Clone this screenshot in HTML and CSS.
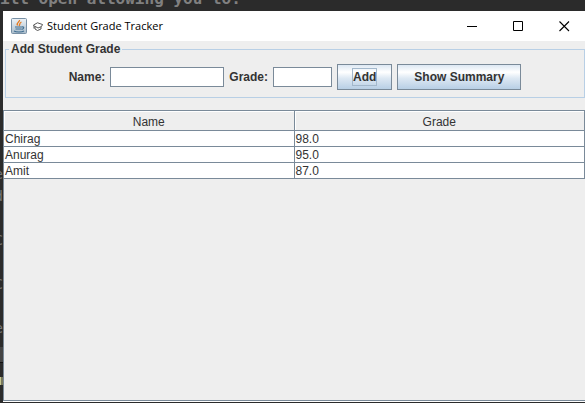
FILE: index.html
```
<!DOCTYPE html>
<html lang="en">
<head>
<meta charset="utf-8">
<title>Student Grade Tracker</title>
<link rel="stylesheet" href="styles.css">
</head>
<body>
<div class="backdrop-line">ill open allowing you to:</div>
<div class="stage">
  <div class="backdrop-edge">
    <span>e</span><span>d</span><span></span><span>C</span><span></span><span>C</span><span></span><span>e</span>
    <i class="edge-block"></i><i class="edge-mark"></i>
  </div>
  <main class="window">
    <header class="titlebar">
      <svg class="java-icon" viewBox="0 0 16 16" aria-hidden="true">
        <defs>
          <linearGradient id="tile" x1="0" y1="0" x2="0" y2="1">
            <stop offset="0" stop-color="#eef3f7"/><stop offset="1" stop-color="#a9bccb"/>
          </linearGradient>
        </defs>
        <rect x=".5" y=".5" width="15" height="15" rx="1" fill="url(#tile)" stroke="#7890a5"/>
        <path d="M8.500 2C9 4 5 4.500 6.500 7.500M10.500 4C8 5 9.500 6 8 8" fill="none" stroke="#e57b22" stroke-width="1.300"/>
        <path d="M4 9h7M4.500 11h6M11 9c2.500-.5 2 2-.3 2.300M3 13c2 1.300 8 1.300 10 0" fill="none" stroke="#416e91" stroke-width="1.200"/>
      </svg>
      <svg class="cap-icon" viewBox="0 0 10 9" aria-hidden="true">
        <path d="M.5 3 4.500.8 9.500 2.500 8.500 4.500 5 6 .5 3.500zM2 5v2l2.500 1.500L8 7V5M1 4v2.500" fill="#fff" stroke="#444" stroke-width=".9"/>
      </svg>
      <h1 class="title">Student Grade Tracker</h1>
      <div class="controls">
        <button type="button" aria-label="Minimize"><svg viewBox="0 0 11 11"><path d="M0 5.500h10" stroke="#000" fill="none"/></svg></button>
        <button type="button" aria-label="Maximize"><svg viewBox="0 0 11 11"><path d="M.5.5h9v9h-9z" stroke="#000" fill="none"/></svg></button>
        <button type="button" aria-label="Close"><svg viewBox="0 0 11 11"><path d="M.5.5l9.500 9.500M10 .5.5 10" stroke="#000" fill="none" stroke-width="1.100"/></svg></button>
      </div>
    </header>
    <form class="grade-form">
      <fieldset class="group">
        <legend>Add Student Grade</legend>
        <div class="fields">
          <label for="name">Name:</label>
          <input id="name" class="name-input" type="text">
          <label for="grade">Grade:</label>
          <input id="grade" class="grade-input" type="text">
          <button type="button" class="metal add"><span class="focus-ring">Add</span></button>
          <button type="button" class="metal">Show Summary</button>
        </div>
      </fieldset>
    </form>
    <section class="scroll-pane">
      <table class="grades">
        <thead><tr><th scope="col">Name</th><th scope="col">Grade</th></tr></thead>
        <tbody>
          <tr><td>Chirag</td><td>98.0</td></tr>
          <tr><td>Anurag</td><td>95.0</td></tr>
          <tr><td>Amit</td><td>87.0</td></tr>
        </tbody>
      </table>
    </section>
  </main>
</div>
</body>
</html>
```
FILE: styles.css
```
* { box-sizing: border-box; }

body {
  margin: 0;
  height: 100vh;
  display: flex;
  flex-direction: column;
  overflow: hidden;
  padding-bottom: 1px;
  background: #2b2b2b;
  color: #333;
  font: 12px/16px "Liberation Sans", Arial, sans-serif;
}

.backdrop-line {
  height: 11px;
  display: flex;
  align-items: flex-end;
  padding-bottom: 2px;
  overflow: hidden;
  white-space: pre;
  color: #808080;
  font: bold 16px/20px "DejaVu Sans Mono", monospace;
}

.stage {
  flex: 1;
  min-height: 0;
  display: grid;
  grid-template-columns: 3px minmax(0, 1fr);
}

.backdrop-edge {
  display: flex;
  flex-direction: column;
  padding-top: 152px;
  overflow: hidden;
  color: #777;
  font: 14px/22px "DejaVu Sans Mono", monospace;
}

.backdrop-edge span {
  flex: 0 0 22px;
  display: flex;
  justify-content: flex-end;
}

.edge-block {
  flex: 0 0 16px;
  margin-top: 8px;
  border-bottom: 1px solid #111;
  background: #444;
}

.edge-mark {
  flex: 0 0 8px;
  margin-top: 14px;
  background: linear-gradient(90deg, #c6c690 1px, #77775c 1px);
}

.window {
  display: flex;
  flex-direction: column;
  min-height: 0;
  background: #eee;
}

.titlebar {
  flex: 0 0 30px;
  display: flex;
  align-items: center;
  padding-left: 8px;
  overflow: hidden;
  background: #fff;
  color: #000;
}

.java-icon { width: 16px; height: 16px; }
.cap-icon { width: 10px; height: 9px; margin: 0 4px 0 6px; }

.title {
  margin: 0;
  font: 11px/16px "Open Sans", "Noto Sans", sans-serif;
}

.controls {
  display: flex;
  align-self: stretch;
  margin-left: auto;
  margin-right: -2px;
}

.controls button {
  width: 46px;
  padding: 0;
  border: 0;
  display: flex;
  align-items: center;
  justify-content: center;
  background: none;
}

.controls svg { width: 11px; height: 11px; }

.grade-form { padding: 0 0 12px 2px; font-weight: bold; }

.group {
  margin: 0;
  min-width: 0;
  padding: 7px 0;
  border: 1px solid #b8cfe5;
}

.group legend { margin-left: 3px; padding: 0 2px; }

.fields {
  display: flex;
  align-items: center;
  justify-content: center;
  gap: 5px;
}

.fields input {
  height: 20px;
  padding: 0 2px;
  border: 1px solid #7a8a99;
  border-radius: 0;
  outline: 0;
  background: #fff;
  color: #333;
  font: 12px "Liberation Sans", Arial, sans-serif;
}

.name-input { width: 114px; }
.grade-input { width: 59px; }

.metal {
  height: 26px;
  padding: 0 16px;
  border: 1px solid #7a8a99;
  border-radius: 0;
  background: linear-gradient(#dde8f3, #fff 30%, #dde8f3 55%, #b8cfe5);
  color: #333;
  font: bold 12px/16px "Liberation Sans", Arial, sans-serif;
}

.add { padding: 0 14px; }

.focus-ring {
  display: block;
  border: 1px solid #a3b8cc;
}

.scroll-pane {
  flex: 1;
  border: 1px solid #7a8a99;
  border-right: 0;
  border-top: 0;
  margin-bottom: 1px;
  box-shadow: 0 1px #fff;
}

.grades {
  width: 100%;
  border-collapse: separate;
  border-spacing: 0;
  table-layout: fixed;
  border-top: 1px solid #7a8a99;
}

.grades th,
.grades td {
  border: 0 solid #7a8a99;
  border-width: 0 1px 1px 0;
}

.grades th {
  height: 20px;
  padding: 3px 0 0;
  font-weight: normal;
  box-shadow: inset 1px 1px #fff;
}

.grades td {
  height: 16px;
  padding: 1px 1px 0;
  background: #fff;
  line-height: 14px;
}
```
